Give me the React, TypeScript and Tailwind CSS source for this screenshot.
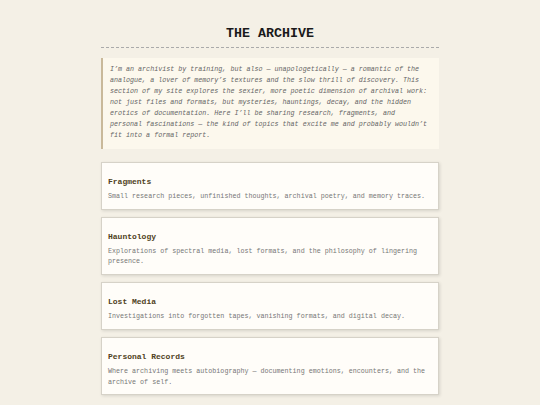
import React from 'react';

const sections = [
  {
    title: 'Fragments',
    desc: 'Small research pieces, unfinished thoughts, archival poetry, and memory traces.',
  },
  {
    title: 'Hauntology',
    desc: 'Explorations of spectral media, lost formats, and the philosophy of lingering presence.',
  },
  {
    title: 'Lost Media',
    desc: 'Investigations into forgotten tapes, vanishing formats, and digital decay.',
  },
  {
    title: 'Personal Records',
    desc: 'Where archiving meets autobiography — documenting emotions, encounters, and the archive of self.',
  },
];

const App: React.FC = () => {
  return (
    <div className="min-h-screen bg-[#f4f0e6] font-['Courier_New','Liberation_Mono',monospace] text-[#333]">
      <div className="w-[338px] mx-auto pt-[26px] pb-8">
        {/* Header */}
        <h1 className="text-center font-bold text-[13.3px] leading-[16px] text-[#1a1a1a] pb-[5px] border-b border-dashed border-[#aaa]">
          THE ARCHIVE
        </h1>

        {/* Intro */}
        <div className="mt-[10px] bg-[#fcf8ed] border-l-2 border-[#c9b99a] pl-[7px] pr-2 pt-[6px] pb-[8px]">
          <p className="italic text-[6.7px] leading-[11px] text-[#666]">
            I’m an archivist by training, but also — unapologetically — a romantic of the analogue, a lover of
            memory’s textures and the slow thrill of discovery. This section of my site explores the sexier, more
            poetic dimension of archival work: not just files and formats, but mysteries, hauntings, decay, and the
            hidden erotics of documentation. Here I’ll be sharing research, fragments, and personal fascinations —
            the kind of topics that excite me and probably wouldn’t fit into a formal report.
          </p>
        </div>

        {/* Sections */}
        <div className="mt-[13px] flex flex-col gap-[7px]">
          {sections.map((s) => (
            <div
              key={s.title}
              className="bg-[#fffdf9] border border-[#d6d2c8] shadow-[1px_1px_3px_rgba(0,0,0,0.12)] px-[6px] pt-[13px] pb-[7px]"
            >
              <h2 className="font-bold text-[8px] leading-[12px] text-[#4f3f22]">{s.title}</h2>
              <p className="mt-[3px] text-[6.7px] leading-[10.7px] text-[#777]">{s.desc}</p>
            </div>
          ))}
        </div>
      </div>
    </div>
  );
};

export default App;
